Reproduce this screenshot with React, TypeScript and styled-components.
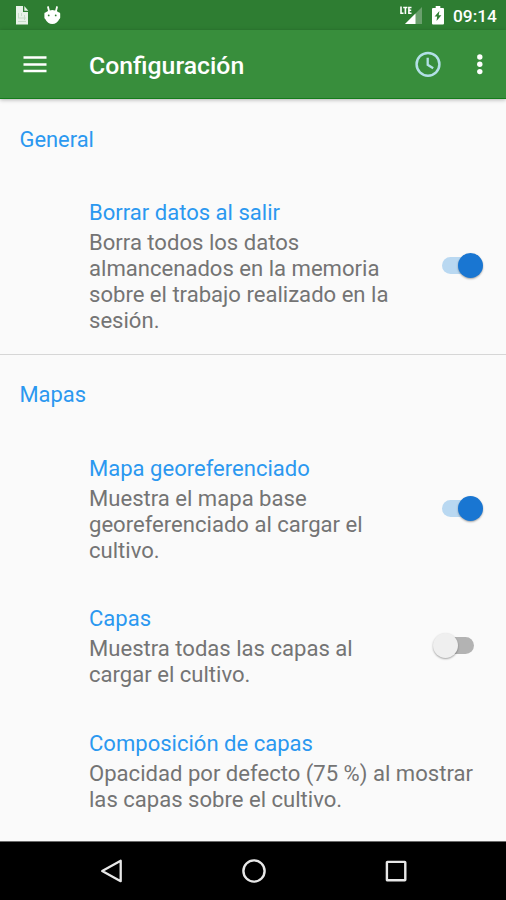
import React from "react";
import styled, { createGlobalStyle } from "styled-components";

const GlobalStyle = createGlobalStyle`
  * { box-sizing: border-box; }
  body { margin: 0; background: #fafafa; }
`;

const Screen = styled.div`
  width: 506px;
  height: 900px;
  display: flex;
  flex-direction: column;
  overflow: hidden;
  background: #fafafa;
  font-family: Roboto, "Liberation Sans", sans-serif;
`;

const StatusBar = styled.header`
  flex: none;
  height: 30px;
  display: flex;
  align-items: center;
  justify-content: space-between;
  padding: 0 9px 0 14px;
  background: #2e7d32;
  color: #fff;
`;

const StatusGroup = styled.div<{ $gap: number }>`
  display: flex;
  align-items: center;
  gap: ${(p) => p.$gap}px;
  height: 30px;
`;

const Clock = styled.span`
  padding-top: 2px;
  font-size: 17.3px;
  font-weight: 500;
  line-height: 20px;
  width: 44px;
  white-space: nowrap;
`;

const AppBar = styled.div`
  flex: none;
  height: 69px;
  display: flex;
  align-items: center;
  padding: 0 22px 0 23px;
  background: #388e3c;
  border-bottom: 1px solid #147c1b;
  box-shadow: 0 1px 4px rgba(0, 0, 0, 0.28);
  color: #fff;
`;

const IconButton = styled.button`
  display: flex;
  padding: 0;
  border: 0;
  background: none;
  color: inherit;
`;

const Title = styled.h1`
  flex: 1;
  margin: 2px 0 0 42px;
  font-size: 24.8px;
  font-weight: 500;
  line-height: 29px;
`;

const Actions = styled.div`
  display: flex;
  align-items: center;
  gap: 35px;
`;

const Content = styled.main`
  flex: 1;
  min-height: 0;
  overflow: hidden;
`;

const Section = styled.section`
  & + & {
    border-top: 1px solid #d6d6d6;
  }
`;

const SectionTitle = styled.h2`
  margin: 0;
  padding: 27.5px 19.5px 26.5px;
  color: #2b98f0;
  font-size: 21.9px;
  font-weight: 400;
  line-height: 25.7px;
`;

const Item = styled.div<{ $last?: boolean }>`
  display: flex;
  align-items: center;
  justify-content: space-between;
  padding: 21.7px 23px ${(p) => (p.$last ? 20.4 : 21.4)}px 89px;
`;

const ItemTitle = styled.h3`
  margin: 0 0 4.5px;
  color: #2b98f0;
  font-size: 22.05px;
  font-weight: 400;
  line-height: 25.6px;
  white-space: nowrap;
`;

const Summary = styled.p`
  margin: 0;
  color: #747474;
  font-size: 22.08px;
  line-height: 25.7px;
  white-space: pre;
`;

const SwitchBox = styled.div`
  flex: none;
  width: 50px;
  height: 25px;
  margin-bottom: 3px;
  display: grid;
  align-items: center;
`;

const Track = styled.div<{ $on: boolean }>`
  grid-area: 1 / 1;
  justify-self: center;
  width: 32px;
  height: 17px;
  border-radius: 9px;
  background: ${(p) => (p.$on ? "#b9d8f1" : "#b3b3b3")};
`;

const Thumb = styled.div<{ $on: boolean }>`
  grid-area: 1 / 1;
  justify-self: ${(p) => (p.$on ? "end" : "start")};
  width: 25px;
  height: 25px;
  border-radius: 50%;
  background: ${(p) => (p.$on ? "#1976d2" : "#efefef")};
  box-shadow: 0 1px 2px rgba(0, 0, 0, 0.35);
`;

const NavBar = styled.nav`
  flex: none;
  height: 59px;
  display: flex;
  justify-content: center;
  gap: 118px;
  padding: 17px 0 0 1px;
  border-top: 1px solid #6b6b6b;
  background: #000;
  color: #e8e8e8;
`;

function Switch({ on }: { on: boolean }) {
  return (
    <SwitchBox role="switch" aria-checked={on}>
      <Track $on={on} />
      <Thumb $on={on} />
    </SwitchBox>
  );
}

interface Pref {
  title: string;
  summary: string;
  on?: boolean;
}

const sections: { name: string; prefs: Pref[] }[] = [
  {
    name: "General",
    prefs: [
      {
        title: "Borrar datos al salir",
        summary:
          "Borra todos los datos\nalmancenados en la memoria\nsobre el trabajo realizado en la\nsesión.",
        on: true,
      },
    ],
  },
  {
    name: "Mapas",
    prefs: [
      {
        title: "Mapa georeferenciado",
        summary: "Muestra el mapa base\ngeoreferenciado al cargar el\ncultivo.",
        on: true,
      },
      {
        title: "Capas",
        summary: "Muestra todas las capas al\ncargar el cultivo.",
        on: false,
      },
      {
        title: "Composición de capas",
        summary: "Opacidad por defecto (75 %) al mostrar\nlas capas sobre el cultivo.",
      },
    ],
  },
];

const FileIcon = () => (
  <svg width="16" height="20" viewBox="0 0 16 20">
    <path d="M2 1h7v6h5v12.500H2z" fill="#e9f2e9" />
    <path d="M10.300 1l4 4.700h-4z" fill="#e9f2e9" />
    <path d="M4.500 8v5M7.500 8v3M10.500 10v5M4 13h8M4 16.500h8" stroke="#c8dcc9" strokeWidth="1" />
  </svg>
);

const DroidIcon = () => (
  <svg width="18" height="20" viewBox="0 0 18 20">
    <path d="M5 2l1 4M14 2l-1 4" stroke="#fff" strokeWidth="1.800" strokeLinecap="round" />
    <path
      d="M1.400 8.500q0-1 1.100-1Q5 5 9.300 5t6.700 2.500q1.200 0 1.200 1v4.300q0 1-1 1.400Q14 19 9.300 19t-6.900-4.800q-1-.4-1-1.400z"
      fill="#fff"
    />
    <circle cx="5.700" cy="10.400" r="0.900" fill="#2e7d32" />
    <circle cx="12.700" cy="10.400" r="0.900" fill="#2e7d32" />
  </svg>
);

const SignalIcon = () => (
  <svg width="24" height="20" viewBox="0 0 24 20">
    <path d="M23 2v17H6z" fill="#6aa06d" />
    <path d="M16.500 8.500V19H6z" fill="#fff" />
    <path
      d="M2 1.500v6.700h2.500M4.200 2.500h4.200M6.400 2.500v6.400M12.500 2.500H9.900v5.700h2.600M9.900 5.200h2.300"
      fill="none"
      stroke="#fff"
      strokeWidth="1.600"
    />
  </svg>
);

const BatteryIcon = () => (
  <svg width="12" height="20" viewBox="0 0 12 20">
    <path d="M3.700 1h4.600v2H11q1 0 1 1v14.500q0 1-1 1H1q-1 0-1-1V4q0-1 1-1h2.700z" fill="#fff" />
    <path d="M7.400 6L2.600 11.600h2.600L4.500 16l4.900-5.800H6.700z" fill="#2e7d32" />
  </svg>
);

const MenuIcon = () => (
  <svg width="24" height="18" viewBox="0 0 24 18">
    <path d="M0.500 2.500h23M0.500 9.500h23M0.500 16h23" stroke="#fff" strokeWidth="2.600" />
  </svg>
);

const HistoryIcon = () => (
  <svg width="26" height="26" viewBox="0 0 26 26" fill="none" stroke="#b2e0e6">
    <circle cx="13" cy="13.300" r="11.400" strokeWidth="2.500" />
    <path d="M12.700 6.800v7l5.500 3.400" strokeWidth="2.300" />
  </svg>
);

const MoreIcon = () => (
  <svg width="8" height="22" viewBox="0 0 8 22" fill="#fff">
    <circle cx="3.800" cy="4" r="2.700" />
    <circle cx="3.800" cy="11.300" r="2.700" />
    <circle cx="3.800" cy="18.600" r="2.700" />
  </svg>
);

const BackIcon = () => (
  <svg width="24" height="24" viewBox="0 0 24 24" fill="none" stroke="currentColor" strokeWidth="2.300">
    <path d="M20.700 1.800v20.400L2.200 12z" strokeLinejoin="round" />
  </svg>
);

const HomeIcon = () => (
  <svg width="24" height="24" viewBox="0 0 24 24" fill="none" stroke="currentColor" strokeWidth="2.400">
    <circle cx="12" cy="12" r="10.600" />
  </svg>
);

const RecentsIcon = () => (
  <svg width="24" height="24" viewBox="0 0 24 24" fill="none" stroke="currentColor" strokeWidth="2.400">
    <rect x="2.900" y="2.900" width="18.400" height="18.400" rx="0.500" />
  </svg>
);

export default function App() {
  return (
    <>
      <GlobalStyle />
      <Screen>
        <StatusBar>
          <StatusGroup $gap={13}>
            <FileIcon />
            <DroidIcon />
          </StatusGroup>
          <StatusGroup $gap={9}>
            <SignalIcon />
            <BatteryIcon />
            <Clock>09:14</Clock>
          </StatusGroup>
        </StatusBar>
        <AppBar>
          <IconButton aria-label="Menú">
            <MenuIcon />
          </IconButton>
          <Title>Configuración</Title>
          <Actions>
            <IconButton aria-label="Historial">
              <HistoryIcon />
            </IconButton>
            <IconButton aria-label="Más opciones">
              <MoreIcon />
            </IconButton>
          </Actions>
        </AppBar>
        <Content>
          {sections.map((section) => (
            <Section key={section.name}>
              <SectionTitle>{section.name}</SectionTitle>
              {section.prefs.map((pref, i) => (
                <Item key={pref.title} $last={i === section.prefs.length - 1}>
                  <div>
                    <ItemTitle>{pref.title}</ItemTitle>
                    <Summary>{pref.summary}</Summary>
                  </div>
                  {pref.on !== undefined && <Switch on={pref.on} />}
                </Item>
              ))}
            </Section>
          ))}
        </Content>
        <NavBar>
          <IconButton aria-label="Atrás">
            <BackIcon />
          </IconButton>
          <IconButton aria-label="Inicio">
            <HomeIcon />
          </IconButton>
          <IconButton aria-label="Recientes">
            <RecentsIcon />
          </IconButton>
        </NavBar>
      </Screen>
    </>
  );
}
